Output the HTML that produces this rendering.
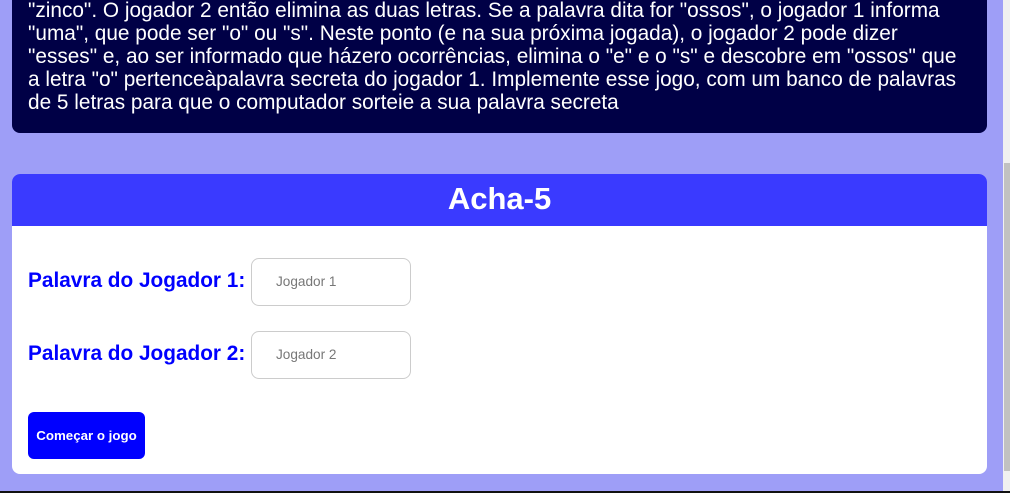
<!DOCTYPE html>
<html><head><meta charset="utf-8"><style>
*{box-sizing:border-box;margin:0;padding:0}
html,body{width:1010px;height:493px;overflow:hidden}
body{background:#9e9ef7;font-family:"Liberation Sans",Arial,sans-serif;position:relative}
.desc{position:absolute;left:12px;top:-20px;width:975px;height:153px;background:#000046;border-radius:0 0 8px 8px;color:#fff;font-size:20.8px;line-height:23px;padding:19px 0 0 16px;white-space:nowrap}
.card{position:absolute;left:12px;top:174px;width:975px;height:300px;background:#fff;border-radius:8px;overflow:hidden}
.hd{height:52px;background:#3a3aff;color:#fff;font-weight:bold;font-size:31px;text-align:center;line-height:50px}
.lbl{position:absolute;left:16px;color:#0000ff;font-weight:bold;font-size:20.8px}
.inp{position:absolute;left:239px;width:160px;height:48px;border:1px solid #ccc;border-radius:8px;color:#777;font-size:13.6px;padding-left:24px;line-height:46px}
.btn{position:absolute;left:16px;top:238px;width:117px;height:47px;background:#0000ff;border-radius:6px;color:#fff;font-weight:bold;font-size:13.3px;text-align:center;line-height:47px}
.sb{position:absolute;left:1003px;top:0;width:7px;height:491px;background:#f0f0f0}
.th{position:absolute;left:1004px;top:163px;width:6px;height:308px;background:#c1c1c1}
.bot{position:absolute;left:0;top:491px;width:1010px;height:2px;background:#111}
</style></head><body>
<div class="desc">"zinco". O jogador 2 então elimina as duas letras. Se a palavra dita for "ossos", o jogador 1 informa<br>"uma", que pode ser "o" ou "s". Neste ponto (e na sua próxima jogada), o jogador 2 pode dizer<br>"esses" e, ao ser informado que házero ocorrências, elimina o "e" e o "s" e descobre em "ossos" que<br>a letra "o" pertenceàpalavra secreta do jogador 1. Implemente esse jogo, com um banco de palavras<br>de 5 letras para que o computador sorteie a sua palavra secreta</div>
<div class="card">
<div class="hd">Acha-5</div>
<div class="lbl" style="top:95px">Palavra do Jogador 1:</div>
<div class="inp" style="top:84px">Jogador 1</div>
<div class="lbl" style="top:168px">Palavra do Jogador 2:</div>
<div class="inp" style="top:157px">Jogador 2</div>
<div class="btn">Começar o jogo</div>
</div>
<div class="sb"></div><div class="th"></div><div class="bot"></div>
</body></html>
